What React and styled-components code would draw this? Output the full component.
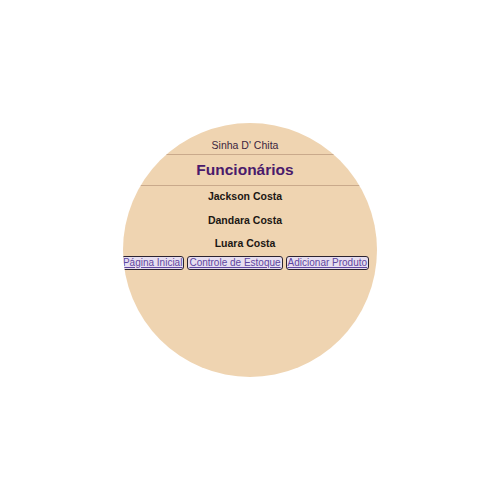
import React from "react";
import styled, { createGlobalStyle } from "styled-components";

const Global = createGlobalStyle`
  html, body { margin: 0; padding: 0; background: #ffffff; }
  body { font-family: "Liberation Sans", Arial, sans-serif; }
`;

const Page = styled.div`
  width: 500px;
  height: 500px;
  display: flex;
  align-items: center;
  justify-content: center;
`;

const Circle = styled.div`
  width: 254px;
  height: 254px;
  border-radius: 50%;
  background: #efd4b1;
  overflow: hidden;
  box-sizing: border-box;
  padding: 15px 10px 0 0;
  display: flex;
  flex-direction: column;
  align-items: stretch;
`;

const Brand = styled.div`
  text-align: center;
  font-size: 10.5px;
  color: #3b2540;
  line-height: 14px;
  padding-bottom: 2px;
  border-bottom: 1px solid #c9a98b;
`;

const Title = styled.h1`
  margin: 0;
  text-align: center;
  font-size: 15.5px;
  font-weight: bold;
  color: #4a1a6b;
  line-height: 30px;
  border-bottom: 1px solid #c9a98b;
`;

const Name = styled.div`
  text-align: center;
  font-size: 10.5px;
  font-weight: bold;
  color: #1c1714;
  line-height: 23.5px;
`;

const NameList = styled.div`
  display: flex;
  flex-direction: column;
  margin-top: -1px;
`;

const Buttons = styled.div`
  display: flex;
  justify-content: center;
  gap: 3px;
  margin-top: 0;
  white-space: nowrap;
`;

const LinkButton = styled.a`
  display: inline-block;
  font-size: 10px;
  line-height: 12px;
  padding: 0 1px;
  border: 1px solid #2c2430;
  border-radius: 3px;
  background: #e7def0;
  color: #5e46a0;
  text-decoration: underline;
  cursor: pointer;
`;

const names = ["Jackson Costa", "Dandara Costa", "Luara Costa"];
const links = ["Página Inicial", "Controle de Estoque", "Adicionar Produto"];

export default function App() {
  return (
    <>
      <Global />
      <Page>
        <Circle>
          <Brand>Sinha D' Chita</Brand>
          <Title>Funcionários</Title>
          <NameList>
            {names.map((n) => (
              <Name key={n}>{n}</Name>
            ))}
          </NameList>
          <Buttons>
            {links.map((l) => (
              <LinkButton key={l}>{l}</LinkButton>
            ))}
          </Buttons>
        </Circle>
      </Page>
    </>
  );
}
